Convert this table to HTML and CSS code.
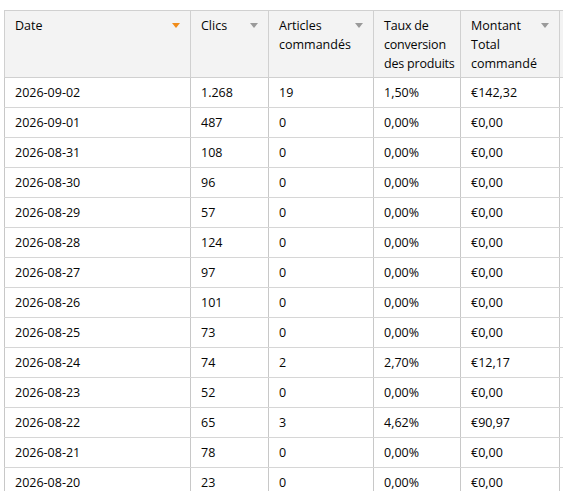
FILE: index.html
```html
<!DOCTYPE html>
<html lang="fr">
  <head>
    <meta charset="UTF-8" />
    <meta name="viewport" content="width=device-width, initial-scale=1.0" />
    <title>Rapport</title>
    <link rel="stylesheet" href="styles.css">
  </head>
  <body>
    <div class="report">
      <table class="report-table">
        <colgroup>
          <col class="col-date" />
          <col class="col-clics" />
          <col class="col-articles" />
          <col class="col-taux" />
          <col class="col-montant" />
          <col class="col-extra" />
        </colgroup>
        <thead>
          <tr>
            <th><span class="th-label">Date</span><span class="sort sort--active"></span></th>
            <th><span class="th-label">Clics</span><span class="sort"></span></th>
            <th><span class="th-label">Articles commandés</span><span class="sort"></span></th>
            <th class="th--plain"><span class="th-label th-label--tight">Taux de<br>conversion<br>des produits</span></th>
            <th><span class="th-label">Montant Total commandé</span><span class="sort"></span></th>
            <th></th>
          </tr>
        </thead>
        <tbody>
          <tr><td>2026-09-02</td><td>1.268</td><td>19</td><td>1,50%</td><td>€142,32</td><td></td></tr>
          <tr><td>2026-09-01</td><td>487</td><td>0</td><td>0,00%</td><td>€0,00</td><td></td></tr>
          <tr><td>2026-08-31</td><td>108</td><td>0</td><td>0,00%</td><td>€0,00</td><td></td></tr>
          <tr><td>2026-08-30</td><td>96</td><td>0</td><td>0,00%</td><td>€0,00</td><td></td></tr>
          <tr><td>2026-08-29</td><td>57</td><td>0</td><td>0,00%</td><td>€0,00</td><td></td></tr>
          <tr><td>2026-08-28</td><td>124</td><td>0</td><td>0,00%</td><td>€0,00</td><td></td></tr>
          <tr><td>2026-08-27</td><td>97</td><td>0</td><td>0,00%</td><td>€0,00</td><td></td></tr>
          <tr><td>2026-08-26</td><td>101</td><td>0</td><td>0,00%</td><td>€0,00</td><td></td></tr>
          <tr><td>2026-08-25</td><td>73</td><td>0</td><td>0,00%</td><td>€0,00</td><td></td></tr>
          <tr><td>2026-08-24</td><td>74</td><td>2</td><td>2,70%</td><td>€12,17</td><td></td></tr>
          <tr><td>2026-08-23</td><td>52</td><td>0</td><td>0,00%</td><td>€0,00</td><td></td></tr>
          <tr><td>2026-08-22</td><td>65</td><td>3</td><td>4,62%</td><td>€90,97</td><td></td></tr>
          <tr><td>2026-08-21</td><td>78</td><td>0</td><td>0,00%</td><td>€0,00</td><td></td></tr>
          <tr><td>2026-08-20</td><td>23</td><td>0</td><td>0,00%</td><td>€0,00</td><td></td></tr>
        </tbody>
      </table>
    </div>
  </body>
</html>
```
FILE: styles.css
```css
* {
  margin: 0;
  padding: 0;
  box-sizing: border-box;
}

body {
  background: #ffffff;
  font-family: "Open Sans", "Noto Sans", sans-serif;
  font-size: 12.5px;
  color: #050505;
}

.report {
  padding: 10px 0 0 4px;
  height: 491px;
  overflow: hidden;
}

.report-table {
  border-collapse: collapse;
  table-layout: fixed;
  width: 656px;
}

.col-date { width: 186px; }
.col-clics { width: 78px; }
.col-articles { width: 105px; }
.col-taux { width: 87px; }
.col-montant { width: 99px; }
.col-extra { width: 101px; }

th,
td {
  border: 1px solid #d0d0d0;
  text-align: left;
  font-weight: normal;
}

th {
  position: relative;
  height: 66px;
  padding: 5px 22px 4px 10px;
  vertical-align: top;
  background: #f3f3f3;
  line-height: 19px;
}

.th--plain {
  padding-right: 0;
}

.th-label {
  display: block;
}

.th-label--tight {
  white-space: nowrap;
  letter-spacing: -0.2px;
}

.sort {
  position: absolute;
  top: 12px;
  right: 10px;
  width: 0;
  height: 0;
  border-left: 4.5px solid transparent;
  border-right: 4.5px solid transparent;
  border-top: 5px solid #9a9a9a;
}

.sort--active {
  border-top-color: #f08c1a;
}

tbody td {
  height: 30px;
  padding: 0 10px;
  vertical-align: middle;
  border-color: #d6d6d6 #c8c8c8;
}
```
